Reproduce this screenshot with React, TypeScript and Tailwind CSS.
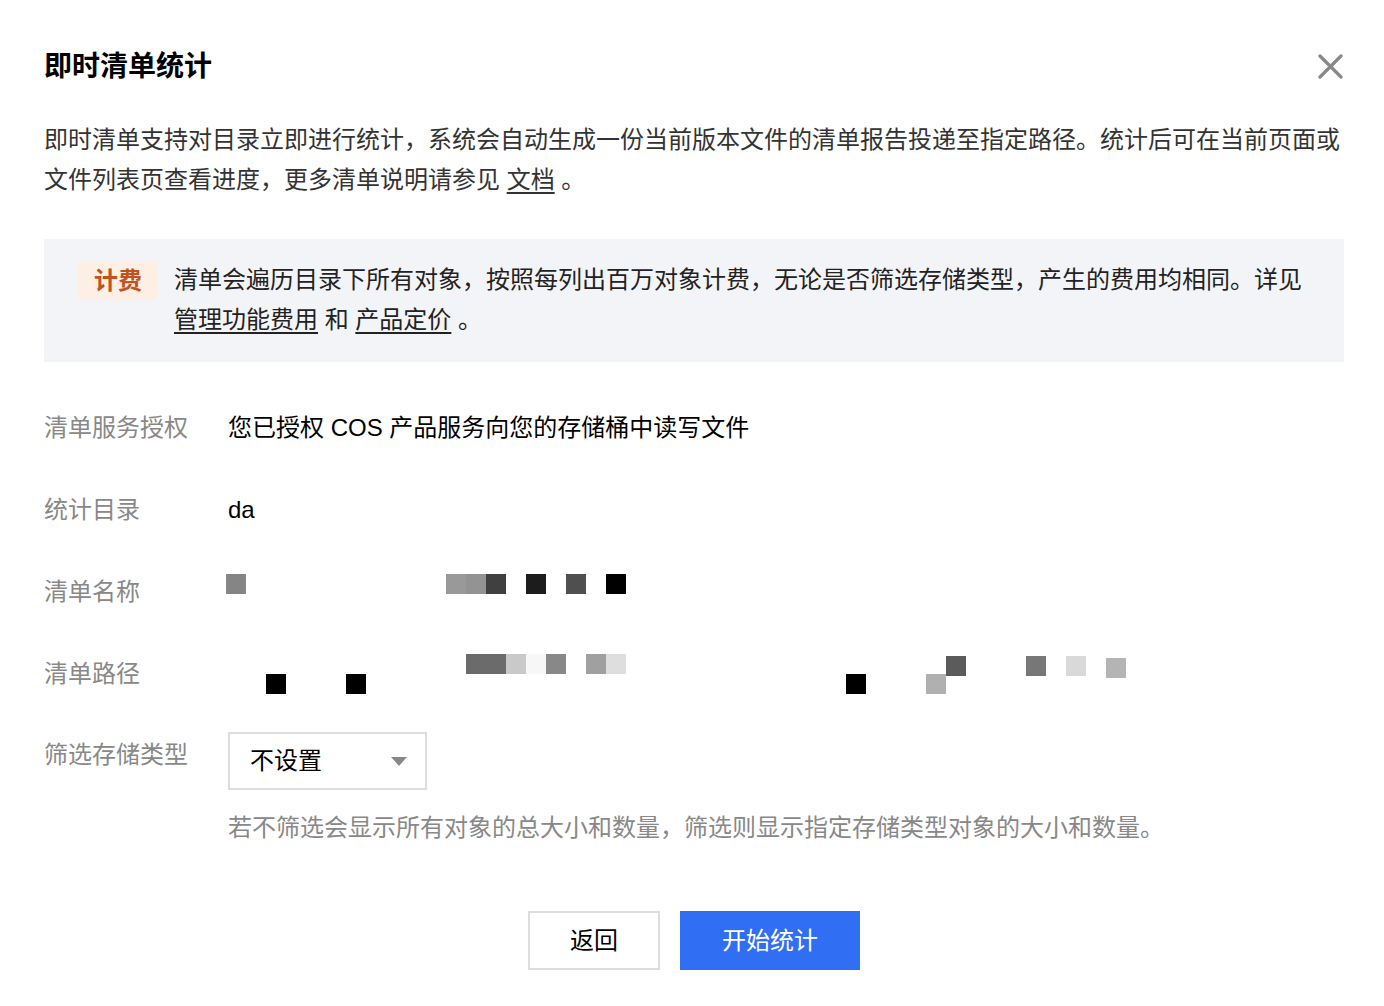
import React from "react";

type Px = [number, number, string];

// blurred / pixelated values, x offset from value column, y offset from row top
const namePixels: Px[] = [
  [-2, 2, "#858585"],
  [218, 2, "#999999"],
  [238, 2, "#939393"],
  [258, 2, "#404040"],
  [298, 2, "#1c1c1c"],
  [338, 2, "#4f4f4f"],
  [378, 2, "#000000"],
];

const pathPixels: Px[] = [
  [238, 0, "#6b6b6b"],
  [258, 0, "#6b6b6b"],
  [278, 0, "#c9c9c9"],
  [298, 0, "#f7f7f7"],
  [318, 0, "#888888"],
  [358, 0, "#a0a0a0"],
  [378, 0, "#dedede"],
  [718, 2, "#5b5b5b"],
  [798, 2, "#777777"],
  [838, 2, "#d9d9d9"],
  [878, 4, "#b4b4b4"],
  [38, 20, "#000000"],
  [118, 20, "#000000"],
  [618, 20, "#000000"],
  [698, 20, "#b0b0b0"],
];

function Pixels({ items }: { items: Px[] }) {
  return (
    <div className="relative h-10 flex-1">
      {items.map(([x, y, c], i) => (
        <span
          key={i}
          className="absolute h-5 w-5"
          style={{ left: x, top: y, backgroundColor: c }}
        />
      ))}
    </div>
  );
}

function Row({ label, children }: { label: string; children: React.ReactNode }) {
  return (
    <div className="flex items-start">
      <div className="w-[184px] shrink-0 text-[#888888] leading-10">{label}</div>
      {children}
    </div>
  );
}

export default function App() {
  return (
    <div
      className="min-h-screen bg-white pl-[44px] pr-[40px] pt-[46px] text-[24px] text-[#222222]"
      style={{ fontFamily: '"Liberation Sans", "Noto Sans CJK SC", sans-serif' }}
    >
      <div className="flex h-10 items-center justify-between">
        <h1 className="mt-[2px] text-[28px] font-bold leading-10 text-black">即时清单统计</h1>
        <button className="flex h-7 w-7 items-center justify-center text-[#888888]">
          <svg width="25" height="25" viewBox="0 0 25 25" fill="none">
            <path d="M2 2L23 23M23 2L2 23" stroke="currentColor" strokeWidth="3.2" strokeLinecap="round" />
          </svg>
        </button>
      </div>

      <p className="mt-[34px] whitespace-nowrap leading-10 text-[#333333]">
        即时清单支持对目录立即进行统计，系统会自动生成一份当前版本文件的清单报告投递至指定路径。统计后可在当前页面或
        <br />
        文件列表页查看进度，更多清单说明请参见{" "}
        <a className="underline underline-offset-4 text-[#333333]">文档</a> 。
      </p>

      <div className="mt-[39px] flex items-start gap-4 bg-[#f3f4f7] pl-[34px] pr-6 pt-[21px] pb-[22px]">
        <span className="mt-[1px] shrink-0 rounded-[3px] bg-[#fdefe4] px-4 text-[24px] font-bold leading-[39px] text-[#c4521c]">
          计费
        </span>
        <p className="leading-10 text-[#222222]">
          清单会遍历目录下所有对象，按照每列出百万对象计费，无论是否筛选存储类型，产生的费用均相同。详见
          <br />
          <a className="underline underline-offset-4">管理功能费用</a> 和{" "}
          <a className="underline underline-offset-4">产品定价</a> 。
        </p>
      </div>

      <div className="mt-[46px] flex flex-col gap-[42px]">
        <Row label="清单服务授权">
          <div className="leading-10 text-black">您已授权 COS 产品服务向您的存储桶中读写文件</div>
        </Row>
        <Row label="统计目录">
          <div className="leading-10 text-black">da</div>
        </Row>
        <Row label="清单名称">
          <Pixels items={namePixels} />
        </Row>
        <Row label="清单路径">
          <Pixels items={pathPixels} />
        </Row>
        <div className="-mt-[4px] flex items-start">
          <div className="mt-[3px] w-[184px] shrink-0 text-[#888888] leading-10">筛选存储类型</div>
          <div className="flex flex-col">
            <div className="flex h-[58px] w-[199px] items-center justify-between border-2 border-[#dddddd] pl-5 pr-[18px] text-black">
              <span className="leading-10">不设置</span>
              <svg width="16" height="9" viewBox="0 0 16 9">
                <path d="M0 0H16L8 9Z" fill="#888888" />
              </svg>
            </div>
            <p className="mt-[18px] leading-10 text-[#888888]">
              若不筛选会显示所有对象的总大小和数量，筛选则显示指定存储类型对象的大小和数量。
            </p>
          </div>
        </div>
      </div>

      <div className="mt-[63px] flex justify-center gap-5">
        <button className="h-[59px] w-[132px] border-2 border-[#dddddd] bg-white text-black">返回</button>
        <button className="h-[59px] w-[180px] bg-[#306ef4] text-white">开始统计</button>
      </div>
    </div>
  );
}
